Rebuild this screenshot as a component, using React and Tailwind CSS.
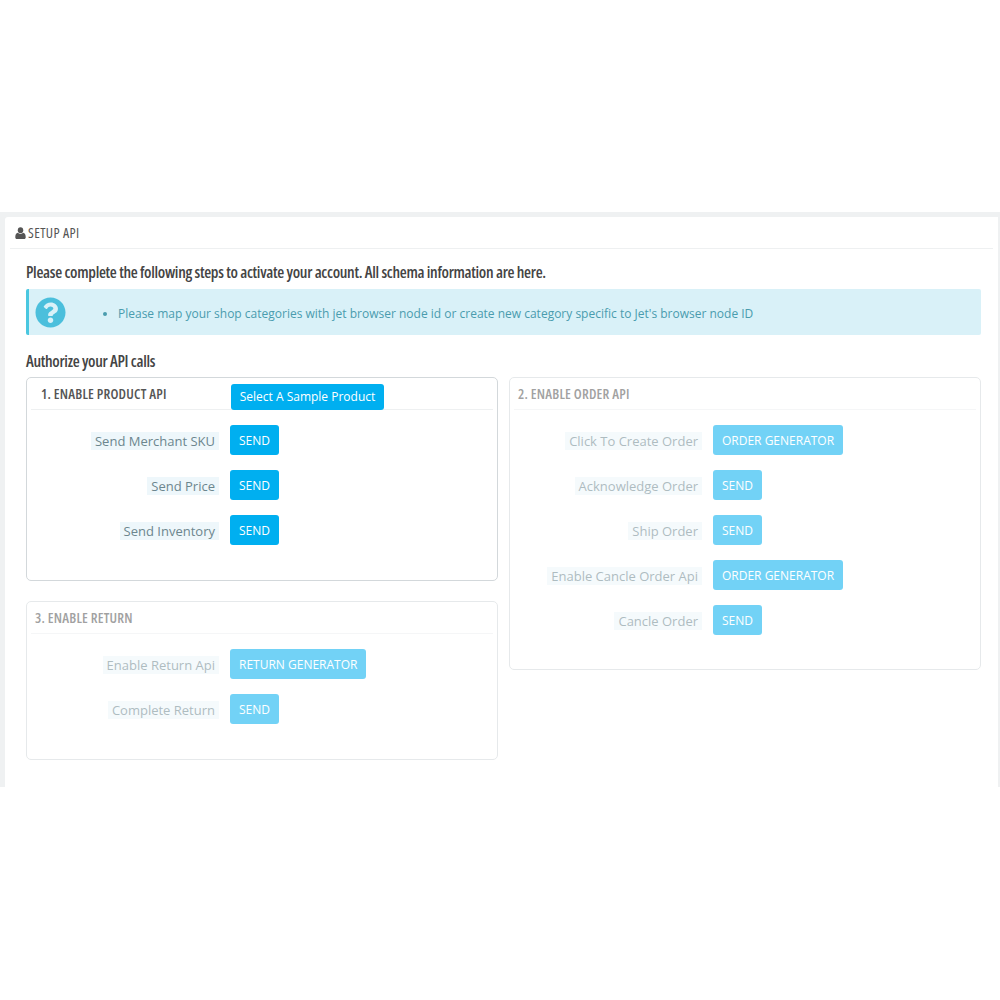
import React from 'react';
import { FaQuestionCircle } from 'react-icons/fa';

const ApiRow = ({ label, action, className = '' }) => (
  <div className={`flex items-center gap-[11px] h-[30px] ${className}`}>
    <div className="w-[192px] flex justify-end">
      <span className="mt-px bg-[#eef7fb] px-1 h-[18px] leading-[18px] text-[13px] text-[#6c868e]">{label}</span>
    </div>
    <button className="h-[30px] pt-px px-[9px] rounded-[3px] bg-[#00aff0] text-white text-[12px] flex items-center">
      {action}
    </button>
  </div>
);

const ApiPanel = ({ title, rows, disabled, titleClass, bodyClass, extra }) => (
  <div className={`relative rounded-[5px] border border-[#d3d8db] bg-white ${disabled ? 'opacity-55' : ''}`}>
    <div className={`mx-1 h-[32px] border-b border-[#eef0f1] flex items-center ${titleClass}`}>
      <span className="text-[14px] font-semibold tracking-[0.2px] text-[#555] uppercase [font-stretch:75%]">{title}</span>
    </div>
    {extra}
    <div className={bodyClass}>
      {rows.map((row, i) => (
        <ApiRow key={i} label={row[0]} action={row[1]} className={i > 0 ? 'mt-[15px]' : ''} />
      ))}
    </div>
  </div>
);

const App = () => {
  return (
    <div className="h-[1000px] bg-white pt-[212px]" style={{ fontFamily: '"Open Sans", sans-serif' }}>
      <div className="h-[575px] bg-[#eff1f2] pt-[5px] pl-[5px] pr-[2px]">
        <div className="h-full bg-white rounded-tl-[3px]">
          <div className="mx-[5px] h-[32px] border-b border-[#eef0f1] flex items-center gap-[2px] pl-[5px]">
            <svg viewBox="0 0 12 12" preserveAspectRatio="none" className="w-[11px] h-[12px] text-[#555]" fill="currentColor">
              <circle cx="6" cy="3.2" r="3" />
              <path d="M0.3 10.2C0.3 7.6 1.4 6 3 5.8C3.8 6.5 4.8 6.9 6 6.9C7.2 6.9 8.2 6.5 9 5.8C10.6 6 11.7 7.6 11.7 10.2C11.7 11.3 11 12 10 12H2C1 12 0.3 11.3 0.3 10.2Z" />
            </svg>
            <span className="text-[14px] tracking-[0.4px] text-[#555] uppercase [font-stretch:75%]">Setup Api</span>
          </div>

          <div className="pl-[21px] pr-[17px]">
            <h2 className="mt-[14px] h-[18px] leading-[18px] text-[16px] font-semibold tracking-[-0.3px] text-[#444] [font-stretch:75%]">
              Please complete the following steps to activate your account. All schema information are here.
            </h2>

            <div className="mt-[8px] h-[46px] flex items-center rounded-[2px] bg-[#d9f1f8] border-l-[3px] border-[#4ac7e0]">
              <FaQuestionCircle className="ml-[6px] w-[31px] h-[31px] text-[#4bbfdc]" />
              <ul className="ml-[39px] mt-[3px] list-disc pl-[13px] text-[12px] text-[#4a9cae]">
                <li>Please map your shop categories with jet browser node id or create new category specific to Jet's browser node ID</li>
              </ul>
            </div>

            <h3 className="mt-[17px] h-[18px] leading-[18px] text-[16px] font-semibold tracking-[-0.3px] text-[#444] [font-stretch:75%]">
              Authorize your API calls
            </h3>

            <div className="mt-[7px] grid grid-cols-2 gap-[11px]">
              <div className="flex flex-col gap-[20px]">
                <ApiPanel
                  title="1. Enable Product Api"
                  titleClass="pl-2.5"
                  bodyClass="pt-[15px] pb-[35px]"
                  rows={[
                    ['Send Merchant SKU', 'SEND'],
                    ['Send Price', 'SEND'],
                    ['Send Inventory', 'SEND'],
                  ]}
                  extra={
                    <button className="absolute left-[204px] top-[6px] h-[26px] w-[153px] rounded-[3px] bg-[#00aff0] text-white text-[12px]">
                      Select A Sample Product
                    </button>
                  }
                />
                <ApiPanel
                  title="3. Enable Return"
                  titleClass="pl-1"
                  disabled
                  bodyClass="pt-[15px] pb-[35px]"
                  rows={[
                    ['Enable Return Api', 'RETURN GENERATOR'],
                    ['Complete Return', 'SEND'],
                  ]}
                />
              </div>
              <div>
                <ApiPanel
                  title="2. Enable Order Api"
                  titleClass="pl-1"
                  disabled
                  bodyClass="pt-[15px] pb-[34px]"
                  rows={[
                    ['Click To Create Order', 'ORDER GENERATOR'],
                    ['Acknowledge Order', 'SEND'],
                    ['Ship Order', 'SEND'],
                    ['Enable Cancle Order Api', 'ORDER GENERATOR'],
                    ['Cancle Order', 'SEND'],
                  ]}
                />
              </div>
            </div>
          </div>
        </div>
      </div>
    </div>
  );
};

export default App;
